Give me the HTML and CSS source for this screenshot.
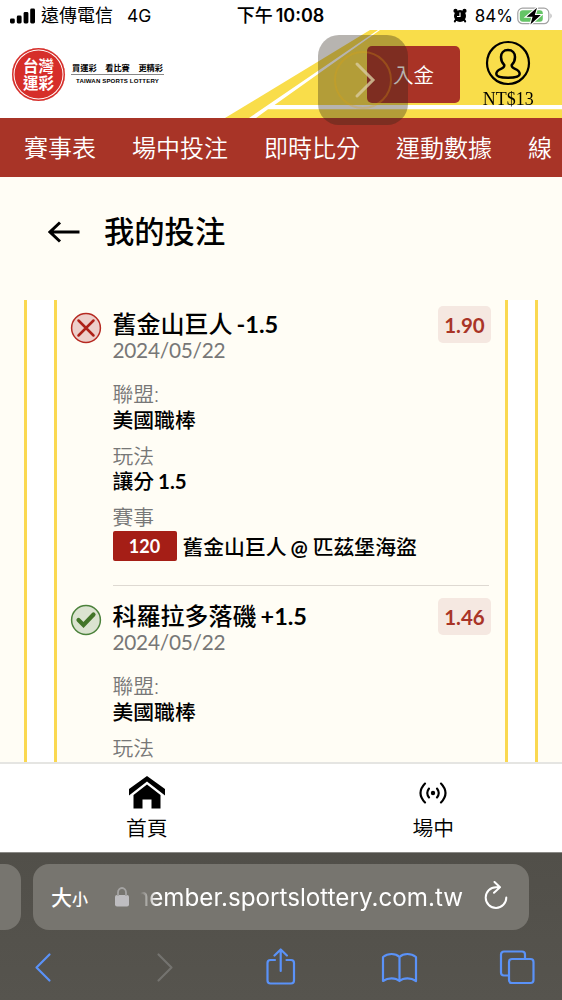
FILE: index.html
```
<!DOCTYPE html>
<html lang="zh-Hant">
<head>
<meta charset="utf-8">
<meta name="viewport" content="width=device-width, initial-scale=1">
<title>我的投注</title>
<link rel="stylesheet" href="styles.css">
</head>
<body>
<div class="phone">
  <header class="status">
    <div class="status-left">
      <svg class="signal" width="26" height="16" viewBox="0 0 26 16"><rect x="0" y="10.500" width="4.800" height="5" rx="1.400"/><rect x="6.800" y="7.500" width="4.800" height="8" rx="1.400"/><rect x="13.600" y="4" width="4.800" height="11.500" rx="1.400"/><rect x="20.200" y=".500" width="4.800" height="15" rx="1.400"/></svg>
      <span class="carrier">遠傳電信</span><span class="network">4G</span>
    </div>
    <div class="clock">下午<span class="clock-digits">10:08</span></div>
    <div class="status-right">
      <svg width="14" height="15" viewBox="0 0 14 15"><circle cx="7" cy="8" r="6"/><circle cx="2.500" cy="2.900" r="2.100"/><circle cx="11.500" cy="2.900" r="2.100"/><path d="M2.700 12l-.9 1.400M11.300 12l.9 1.400" stroke="#000" stroke-width="2" stroke-linecap="round"/><path d="M7 4.500V8.500H4" fill="none" stroke="#fff" stroke-width="1.200"/></svg>
      <span class="percent">84%</span>
      <svg width="37" height="18" viewBox="0 0 37 18"><rect x=".8" y="1.200" width="31" height="15.500" rx="4.800" fill="none" stroke="#a3a3a3" stroke-width="1.200"/><rect x="2.800" y="3.200" width="23" height="11.500" rx="3" fill="#65c466"/><path d="M33.500 6.300q2.200 2.700 0 5.400z" fill="#a3a3a3"/><path d="M20 .8L9.600 9.700h6l-2.200 7.800L23.800 8h-6z" stroke="#fff" stroke-width="2.200" paint-order="stroke"/></svg>
    </div>
  </header>

  <div class="brandbar">
    <svg class="field" width="562" height="88" viewBox="0 0 562 88"><path d="M225 88L370 0H562V88z" fill="#f9dd4a"/><path d="M249 88L378 0h2L274.500 75H562v4.300H268L256 88z" fill="#fff"/></svg>
    <div class="logo">
      <div class="seal"><span>台灣</span><span>運彩</span></div>
      <div class="tagline"><div class="tag-zh"><span>買運彩</span><span>看比賽</span><span>更精彩</span></div><div class="tag-en">TAIWAN SPORTS LOTTERY</div></div>
    </div>
    <button class="deposit">入金</button>
    <div class="account">
      <svg width="46" height="46" viewBox="0 0 46 46" fill="none" stroke="#000"><circle cx="23" cy="23" r="21" stroke-width="2.200"/><path d="M23 10c-4.500 0-7 3-7 7 0 3.400 1.300 6 3.200 7.800.5 2-.7 3-3.200 4-3 1.200-4.700 2.800-4.700 5.200 0 2.700 5.200 3.700 11.700 3.700s11.700-1 11.700-3.700c0-2.400-1.700-4-4.700-5.200-2.500-1-3.700-2-3.200-4 1.900-1.800 3.200-4.400 3.200-7.800 0-4-2.500-7-7-7z" stroke-width="2.500"/></svg>
      <span>NT$13</span>
    </div>
    <div class="assist"><svg width="90" height="90" viewBox="0 0 90 90" fill="none"><circle cx="45" cy="45" r="28" stroke="#e0a010" stroke-opacity=".28" stroke-width="2"/><path d="M39 29L55 45 39 61" stroke="#d8cca0" stroke-opacity=".8" stroke-width="3" stroke-linecap="round"/></svg></div>
  </div>

  <nav class="nav"><span>賽事表</span><span>場中投注</span><span>即時比分</span><span>運動數據</span><span>線</span></nav>

  <div class="page-title">
    <svg width="32" height="22" viewBox="0 0 32 22" fill="none" stroke="#000" stroke-width="3"><path d="M31.500 11H2M12 1.500L2 11l10 9.500"/></svg>
    <h1>我的投注</h1>
  </div>

  <main class="list">
    <div class="outer"><div class="inner">
      <section class="bet">
        <svg class="mark" width="32" height="32" viewBox="0 0 32 32"><circle cx="16" cy="16" r="14.400" fill="#edcfca" stroke="#b62a22" stroke-width="1.500"/><path d="M8.500 8.500l15 15M23.500 8.500l-15 15" stroke="#ae2118" stroke-width="2.500" stroke-linecap="round"/></svg>
        <div class="details">
          <div class="heading"><div><h2>舊金山巨人<b>-1.5</b></h2><div class="date">2024/05/22</div></div><span class="odds">1.90</span></div>
          <div class="field-row"><div class="label">聯盟:</div><div class="value">美國職棒</div></div>
          <div class="field-row"><div class="label low">玩法</div><div class="value">讓分<b>1.5</b></div></div>
          <div class="field-row"><div class="label low">賽事</div><div class="value match"><span class="code">120</span><span class="teams">舊金山巨人<b>@</b><i></i>匹茲堡海盜</span></div></div>
        </div>
      </section>
      <section class="bet">
        <svg class="mark" width="32" height="32" viewBox="0 0 32 32"><circle cx="16" cy="16" r="14.400" fill="#dbe3d0" stroke="#4c823c" stroke-width="1.500"/><path d="M8.500 16l5 5L23.500 10.500" fill="none" stroke="#427528" stroke-width="4.200" stroke-linecap="round"/></svg>
        <div class="details">
          <div class="heading"><div><h2>科羅拉多落磯<b>+1.5</b></h2><div class="date">2024/05/22</div></div><span class="odds">1.46</span></div>
          <div class="field-row"><div class="label">聯盟:</div><div class="value">美國職棒</div></div>
          <div class="field-row"><div class="label low">玩法</div></div>
        </div>
      </section>
    </div></div>
  </main>

  <div class="tabs">
    <div class="tab"><svg width="38" height="34" viewBox="0 0 38 34"><path d="M19 0L37 13V19.500L19 5.500 1 19.500V13z"/><path d="M19 8.500L32.500 19V32.500H23.500V23.500H14.500v9H5.500V19z"/></svg><span>首頁</span></div>
    <div class="tab"><svg width="30" height="34" viewBox="0 0 30 34" fill="none" stroke="#000" stroke-width="2.100" stroke-linecap="round"><circle cx="15" cy="17" r="2.200" fill="#000" stroke="none"/><path d="M11 12.500q-3.500 4.500 0 9M19 12.500q3.500 4.500 0 9M7 7.500q-9 9.500 0 19M23 7.500q9 9.500 0 19"/></svg><span>場中</span></div>
  </div>

  <footer class="browser">
    <div class="address-row">
      <div class="prev-page"></div>
      <div class="address">
        <span class="size">大<small>小</small></span>
        <svg class="lock" width="14" height="20" viewBox="0 0 14 20"><rect y="8" width="14" height="11.500" rx="2" fill="#bebdc0"/><path d="M3 9V5.500a4 4.500 0 0 1 8 0V9" fill="none" stroke="#a5a4a3" stroke-width="1.800"/></svg>
        <span class="url"><span>member.sportslottery.com.tw</span></span>
        <svg class="reload" width="26" height="30" viewBox="0 0 26 30" fill="none" stroke="#fff" stroke-width="2" stroke-linecap="round" stroke-linejoin="round"><path d="M17 6.300H13A10.300 10.300 0 1 0 23.300 16.500M11.500 1l5.500 5.300-6 5.500"/></svg>
      </div>
    </div>
    <div class="tools">
      <svg width="38" height="38" viewBox="0 0 38 38"><path d="M25.500 6.500L12.500 19.500 25.500 32.500"/></svg>
      <svg class="disabled" width="38" height="38" viewBox="0 0 38 38"><path d="M15.500 6.500L28.500 19.500 15.500 32.500"/></svg>
      <svg width="38" height="38" viewBox="0 0 38 38"><path d="M14 12H9.500a3 3 0 0 0-3 3V32.500a3 3 0 0 0 3 3H30a3 3 0 0 0 3-3V15a3 3 0 0 0-3-3H25.500M19.700 23V1.500M13.500 7.500l6.200-6 6.200 6"/></svg>
      <svg width="38" height="38" viewBox="0 0 38 38"><path d="M19.500 9C15.500 5 8 5 3 9V33C8 29.500 15.500 29.500 19.500 33 23.500 29.500 31 29.500 36 33V9C31 5 23.500 5 19.500 9zV32"/></svg>
      <svg width="38" height="38" viewBox="0 0 38 38"><path d="M10.500 27.500H6a3 3 0 0 1-3-3V6.500A3 3 0 0 1 6 3.500H24A3 3 0 0 1 27 6.500V11"/><rect x="11" y="11" width="24.500" height="24" rx="3"/></svg>
    </div>
  </footer>
</div>
</body>
</html>
```
FILE: styles.css
```
* { box-sizing: border-box; }
body { margin: 0; font-family: "Lato", "Noto Sans CJK TC", sans-serif; color: #000; }
svg { display: block; flex: none; }
.phone { width: 562px; height: 1000px; display: flex; flex-direction: column; overflow: hidden; background: #fffdf5; }
.phone > * { flex: none; }

.status { height: 30px; background: #fff; display: grid; grid-template-columns: 1fr auto 1fr; align-items: center; padding: 0 8px 0 10px; font: 17px/30px "Inter", "Noto Sans CJK TC", sans-serif; white-space: nowrap; }
.status-left, .status-right { display: flex; align-items: center; }
.carrier { margin-left: 5px; font-size: 18px; }
.network { margin-left: 14px; font-size: 17.500px; padding-top: 1px; }
.clock { font-weight: 500; font-size: 18px; margin-right: 3px; padding-top: 1px; }
.clock-digits { font-weight: 600; margin-left: 3px; }
.status-right { justify-content: flex-end; }
.percent { margin: 1px 4px 0 8px; }

.brandbar { position: relative; height: 88px; background: #fff; display: flex; align-items: center; padding: 0 26px 0 12px; }
.field { position: absolute; inset: 0; }
.logo { display: flex; align-items: center; gap: 6px; margin-right: auto; position: relative; }
.seal { width: 53px; height: 53px; border-radius: 50%; background: #d62e2a; box-shadow: inset 0 0 0 1.500px #d62e2a, inset 0 0 0 2.500px #fff; color: #fff; font: 700 15.500px/17px "Noto Sans CJK TC", sans-serif; display: flex; flex-direction: column; align-items: center; justify-content: center; padding-bottom: 1px; }
.tagline { width: 93px; padding-bottom: 2px; }
.tag-zh { display: flex; justify-content: space-between; padding: 0 1px; font: 700 8.200px/14px "Noto Sans CJK TC", sans-serif; border-bottom: 1px solid #888; }
.tag-en { font: 700 6.100px/12px "Liberation Sans", sans-serif; letter-spacing: .12px; text-align: center; white-space: nowrap; }
.deposit { position: relative; width: 93px; height: 57px; border: 0; border-radius: 5px; background: #a93326; color: #fff; font: 350 20.500px/56px "Noto Sans CJK TC", sans-serif; padding: 0 0 1px; }
.account { position: relative; width: 56px; margin-left: 20px; display: flex; flex-direction: column; align-items: center; font: 18.500px/24px "Liberation Serif", serif; padding-top: 4px; }
.account span { line-height: 26px; transform: scaleX(.97); }
.assist { position: absolute; left: 318px; top: 5px; width: 90px; height: 90px; border-radius: 21px; background: rgba(45, 35, 22, .34); z-index: 2; }

.nav { height: 59px; padding-left: 24px; background: #a83427; color: #fff; display: flex; gap: 36px; overflow: hidden; white-space: nowrap; font: 350 24px/57px "Noto Sans CJK TC", sans-serif; }
.page-title { height: 123px; display: flex; align-items: center; gap: 24px; padding: 0 48px 13px; }
h1 { margin: 0; font: 500 30.300px/40px "Noto Sans CJK TC", sans-serif; padding-bottom: 5px; }

.list { height: 462px; padding: 0 24px; overflow: hidden; }
.outer { background: #fff; border: solid #fad850; border-width: 0 3px; padding: 0 27px; }
.inner { background: #fffdf5; border: solid #fad850; border-width: 0 3px; padding: 0 16px 0 12.500px; }
.bet { display: flex; gap: 11px; height: 292px; padding-top: 12px; }
.details { flex: 1; height: 274px; border-bottom: 1px solid #ded9d2; }
.heading { height: 69px; display: flex; justify-content: space-between; }
h2 { margin: 0; font: 500 24px/24px "Lato", "Noto Sans CJK TC", sans-serif; white-space: nowrap; }
h2 b { font-size: 23.500px; margin-left: 4px; }
.date { margin-top: 1.500px; font-size: 20.800px; line-height: 24px; letter-spacing: -.25px; color: #777; }
.odds { width: 53px; height: 37px; margin: -6px -2px 0 0; border-radius: 5px; background: #f5e8e1; color: #a93427; font-weight: 700; font-size: 20.500px; line-height: 38px; text-align: center; }
.field-row { height: 61px; font-size: 20.800px; line-height: 26px; }
.label { color: #777; font-weight: 350; }
.low { line-height: 28px; margin-bottom: -2px; }
.value { font-weight: 500; }
.value b { font-size: 20.500px; margin-left: 4px; }
.teams i { display: inline-block; width: 5px; }
.match { display: flex; align-items: center; gap: 6px; white-space: nowrap; margin-top: 2px; }
.teams { padding-top: 2px; }
.code { width: 64px; height: 30px; background: #a51e16; border-radius: 2px; color: #fff; font-size: 18px; line-height: 31px; font-weight: 700; text-align: center; }

.tabs { height: 90px; background: #fff; border-top: 2px solid #e5e5e2; display: flex; padding: 12px 0 0 3.500px; }
.tab { width: 286.500px; flex: none; display: flex; flex-direction: column; align-items: center; font: 350 20.800px/34px "Noto Sans CJK TC", sans-serif; }
.browser { height: 148px; background: linear-gradient(#514f49, #56544e); border-top: 1px solid #8a8985; padding-top: 11px; }
.address-row { display: flex; gap: 12px; }
.prev-page { width: 21px; height: 66px; background: #77756f; border-radius: 0 16px 16px 0; }
.address { width: 496px; height: 66px; background: #77756f; border-radius: 16px; display: flex; align-items: center; padding: 0 20px 0 18px; color: #fff; font-family: "Inter", "Noto Sans CJK TC", sans-serif; }
.size { font-size: 21px; font-weight: 500; width: 64px; white-space: nowrap; margin-top: -3px; }
.size small { font-size: 16px; }
.url { width: 326px; margin-left: 8px; overflow: hidden; display: flex; justify-content: flex-end; font-size: 24.200px; line-height: 34px; padding-top: 1px; -webkit-mask-image: linear-gradient(90deg, transparent 1%, #000 6%); mask-image: linear-gradient(90deg, transparent 1%, #000 6%); }
.reload { margin: -3px 0 0 auto; }
.tools { display: flex; justify-content: space-between; padding: 18px 26px 0 24px; }
.tools svg { fill: none; stroke: #5a92f8; stroke-width: 2.200; stroke-linecap: round; stroke-linejoin: round; }
.tools .disabled { stroke: #74736f; }
```
